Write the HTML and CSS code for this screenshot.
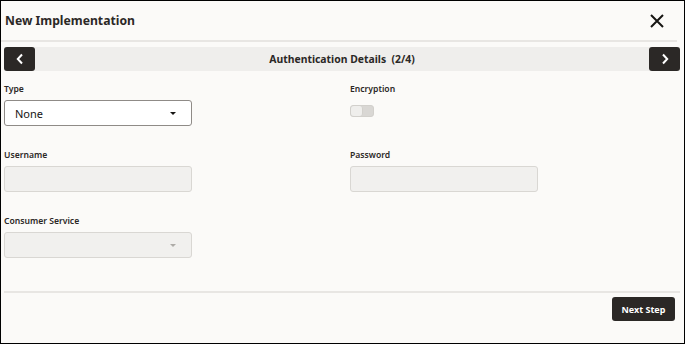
FILE: index.html
```html
<!DOCTYPE html>
<html lang="en">
<head>
    <meta charset="UTF-8">
    <title>New Implementation</title>
    <link rel="stylesheet" href="styles.css">
</head>
<body>
    <div class="dialog">
        <!-- Cabecera -->
        <div class="dialog-header">
            <h1 class="dialog-title">New Implementation</h1>
            <button class="close-button" aria-label="Close">
                <svg width="14" height="14" viewBox="0 0 14 14">
                    <path d="M1 1 L13 13 M13 1 L1 13" stroke="#161513" stroke-width="2" fill="none"/>
                </svg>
            </button>
        </div>

        <!-- Navegación de pasos -->
        <div class="step-nav">
            <button class="nav-button" aria-label="Previous">
                <svg width="10" height="12" viewBox="0 0 10 12">
                    <path d="M7 1.5 L2.8 6 L7 10.5" stroke="#fff" stroke-width="2" fill="none"/>
                </svg>
            </button>
            <div class="step-title">Authentication Details&nbsp;&nbsp;(2/4)</div>
            <button class="nav-button" aria-label="Next">
                <svg width="10" height="12" viewBox="0 0 10 12">
                    <path d="M3 1.5 L7.2 6 L3 10.5" stroke="#fff" stroke-width="2" fill="none"/>
                </svg>
            </button>
        </div>

        <div class="form-grid">
            <div class="field">
                <label class="field-label">Type</label>
                <div class="select">
                    <span>None</span>
                    <span class="caret"></span>
                </div>
            </div>
            <div class="field">
                <label class="field-label">Encryption</label>
                <div class="toggle"><span class="toggle-thumb"></span></div>
            </div>
            <div class="field">
                <label class="field-label">Username</label>
                <div class="input disabled"></div>
            </div>
            <div class="field">
                <label class="field-label">Password</label>
                <div class="input disabled"></div>
            </div>
            <div class="field">
                <label class="field-label">Consumer Service</label>
                <div class="select disabled">
                    <span></span>
                    <span class="caret light"></span>
                </div>
            </div>
        </div>

        <div class="dialog-footer">
            <button class="primary-button">Next Step</button>
        </div>
    </div>
</body>
</html>
```

FILE: styles.css
```css
* {
    box-sizing: border-box;
}
body {
    margin: 0;
    font-family: "Noto Sans", "Open Sans", sans-serif;
    color: #161513;
}
.dialog {
    width: 685px;
    height: 344px;
    border: 1px solid #000;
    background-color: #fbfaf8;
    display: flex;
    flex-direction: column;
}
.dialog-header {
    height: 41px;
    display: flex;
    align-items: center;
    justify-content: space-between;
    padding: 0 15px 0 4px;
    margin-right: 7px;
    border-bottom: 2px solid #e8e6e3;
}
.dialog-title {
    margin: 0;
    font-size: 12.2px;
    font-weight: 700;
    color: #2b2826;
}
.close-button {
    background: transparent;
    border: none;
    padding: 0;
    width: 14px;
    height: 14px;
    margin-right: -2px;
}
.close-button svg {
    display: block;
}
.step-nav {
    display: flex;
    align-items: center;
    height: 24px;
    margin: 5px 4px 0 3px;
    background-color: #efeeec;
}
.nav-button {
    width: 31px;
    height: 24px;
    border: none;
    border-radius: 3px;
    background-color: #2b2826;
    display: flex;
    align-items: center;
    justify-content: center;
    padding: 0;
}
.step-title {
    flex: 1;
    text-align: center;
    font-size: 10.4px;
    font-weight: 700;
    color: #2b2826;
}
.form-grid {
    display: grid;
    grid-template-columns: 346px 187px;
    row-gap: 23px;
    padding: 12px 0 0 3px;
}
.field {
    display: flex;
    flex-direction: column;
    align-items: flex-start;
}
.field-label {
    font-size: 8.6px;
    font-weight: 600;
    line-height: 12px;
    color: #2b2826;
    margin-bottom: 5px;
}
.select,
.input {
    width: 188px;
    height: 26px;
    border-radius: 3px;
    display: flex;
    align-items: center;
    justify-content: space-between;
    padding: 0 15px 0 10px;
    font-size: 11px;
}
.select {
    background-color: #fff;
    border: 1px solid #8f8b87;
}
.disabled {
    background-color: #f1f0ee;
    border: 1px solid #d9d7d3;
}
.caret {
    width: 0;
    height: 0;
    border-left: 3px solid transparent;
    border-right: 3px solid transparent;
    border-top: 3px solid #161513;
}
.caret.light {
    border-top-color: #aeaba7;
}
.toggle {
    width: 24px;
    height: 12px;
    margin-top: 5px;
    border-radius: 3px;
    background-color: #d9d7d4;
    border: 1px solid #d2d0cc;
    display: flex;
}
.toggle-thumb {
    width: 12px;
    height: 10px;
    border-radius: 3px;
    background-color: #efeeec;
    border-right: 1px solid #d2d0cc;
}
.dialog-footer {
    margin: auto 4px 0 3px;
    height: 52px;
    border-top: 2px solid #e8e6e3;
    display: flex;
    justify-content: flex-end;
    align-items: flex-start;
    padding: 4px 5px 0 0;
}
.primary-button {
    height: 24px;
    width: 63px;
    padding: 0;
    border: none;
    border-radius: 3px;
    background-color: #2b2826;
    color: #fff;
    font-family: "Noto Sans", "Open Sans", sans-serif;
    font-size: 9px;
    font-weight: 700;
}
```
